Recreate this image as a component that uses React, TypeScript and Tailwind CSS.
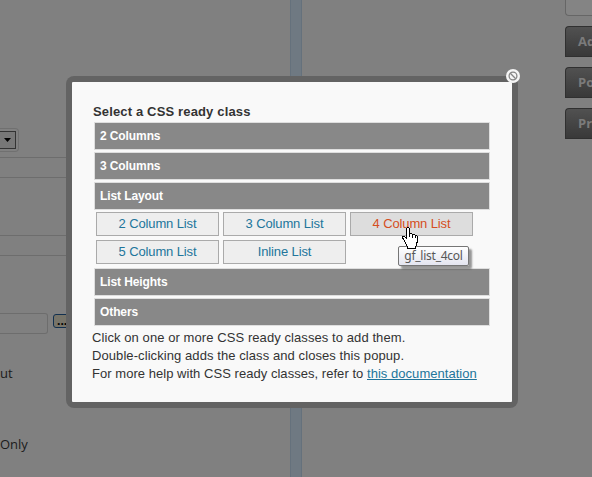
import React from "react";

function Bar({ label }: { label: string }) {
  return (
    <div className="h-7 w-[396px] border border-[#dedede] bg-[#888] pt-px pl-[5px] text-[12px] leading-[25px] font-bold tracking-[-0.1px] text-white">
      {label}
    </div>
  );
}

function ClassButton({ label, active = false }: { label: string; active?: boolean }) {
  return (
    <button
      className={
        "h-6 w-[123px] border border-[#aaa] text-center text-[13px] leading-[22px] tracking-[-0.12px] " +
        (active ? "bg-[#ddd] text-[#d54e21]" : "bg-[#eee] text-[#21759b]")
      }
    >
      {label}
    </button>
  );
}

function SideTab({ label }: { label: string }) {
  return (
    <div className="h-[31px] rounded-tl-[4px] border border-r-0 border-[#303030] bg-gradient-to-b from-[#515151] to-[#393939] pl-3 font-['Open_Sans',sans-serif] text-[13px] leading-[28px] font-bold text-[#7b7b7b]">
      {label}
    </div>
  );
}

function Page() {
  return (
    <div className="flex h-full w-full">
      <div className="flex w-[290px] shrink-0 flex-col pt-[128px] font-['Open_Sans',sans-serif] text-[13px] text-[#1b1b1b]">
        <div className="flex h-6 w-[19px] items-center rounded-r-[4px] border border-l-0 border-[#707070]">
          <div className="flex h-[18px] w-4 items-center justify-center border border-l-0 border-[#333] bg-[#777]">
            <svg width="7" height="4" viewBox="0 0 7 4"><path d="M0 0h7L3.5 4z" fill="#000" /></svg>
          </div>
        </div>
        <div className="mt-[5px] h-[21px] border-y border-[#6d6d6d]" />
        <div className="mt-[57px] h-[21px] border-y border-[#6d6d6d]" />
        <div className="mt-[57px] flex gap-[5px]">
          <div className="h-[21px] w-12 rounded-r-[3px] border border-l-0 border-[#6d6d6d]" />
          <div className="mt-px h-[14px] w-10 rounded-[3px] border border-[#12304f] bg-[#777469] pl-[3px] text-[12px] leading-[11px] font-bold text-black">...</div>
        </div>
        <div className="mt-[29px] h-5 leading-5">ut</div>
        <div className="mt-[51px] h-5 leading-5">Only</div>
      </div>
      <div className="w-3 shrink-0 border-x border-[#65717c] bg-[#6f7982]" />
      <div className="flex flex-1 flex-col pl-[263px]">
        <div className="mb-[10px] h-4 rounded-bl-[4px] border-b border-l border-[#666] bg-[#848484]" />
        <div className="flex flex-col gap-[10px]">
          <SideTab label="Ad" />
          <SideTab label="Po" />
          <SideTab label="Pr" />
        </div>
      </div>
    </div>
  );
}

function Popup() {
  return (
    <div className="absolute top-[76px] left-[66px] h-[332px] w-[452px] rounded-[8px] bg-[#636363] p-[6px]">
      <div className="h-full rounded-[1px] bg-[#f9f9f9] pt-[21px] pl-5">
        <h3 className="ml-px h-[19px] text-[13px] leading-[18px] font-bold tracking-[0.15px] text-[#333]">
          Select a CSS ready class
        </h3>
        <div className="ml-[2px] flex flex-col gap-[2px]">
          <Bar label="2 Columns" />
          <Bar label="3 Columns" />
          <Bar label="List Layout" />
          <div className="mb-[2px] ml-[2px] flex w-[390px] flex-wrap gap-1">
            <ClassButton label="2 Column List" />
            <ClassButton label="3 Column List" />
            <ClassButton label="4 Column List" active />
            <ClassButton label="5 Column List" />
            <ClassButton label="Inline List" />
          </div>
          <Bar label="List Heights" />
          <Bar label="Others" />
        </div>
        <div className="mt-[3px] text-[13px] leading-[18px] whitespace-nowrap text-[#333]">
          <p className="tracking-[0.08px]">Click on one or more CSS ready classes to add them.</p>
          <p className="tracking-[0.08px]">Double-clicking adds the class and closes this popup.</p>
          <p className="tracking-[0.04px]">
            For more help with CSS ready classes, refer to{" "}
            <a className="text-[#21759b] underline">this documentation</a>
          </p>
        </div>
      </div>
      <svg className="absolute top-[-8px] left-[439px]" width="16" height="16" viewBox="0 0 16 16" fill="none">
        <circle cx="8" cy="8" r="7" fill="#f5f5f5" />
        <circle cx="8" cy="8" r="3.9" stroke="#858585" strokeWidth="1.3" />
        <path d="M5.3 5.3l5.4 5.4" stroke="#858585" strokeWidth="1.3" />
      </svg>
    </div>
  );
}

function HandCursor() {
  return (
    <svg className="absolute top-[227px] left-[402px]" width="17" height="22" viewBox="0 0 17 22" shapeRendering="crispEdges">
      <path
        d="M4.5 1.5l1-1h1l1 1v5h2l1 1h2l1 1h1l1 1v5l-1 2v2l-1 1v2h-8v-2l-2-3v-1l-2-3-1-2v-1h2l2 2z"
        fill="#fff"
        stroke="#000"
      />
      <path d="M7.5 6v4M10.5 8v3M13.5 9v2" stroke="#000" />
    </svg>
  );
}

export default function App() {
  return (
    <div className="relative h-[477px] w-[592px] overflow-hidden bg-[#808080] font-['Liberation_Sans',Arial,sans-serif]">
      <Page />
      <Popup />
      <div className="absolute top-[246px] left-[398px] h-5 w-[71px] rounded-[2px] border border-[#767676] bg-gradient-to-b from-white to-[#e4e5f0] text-center font-['Noto_Sans',sans-serif] text-[12px] leading-[18px] tracking-[-0.25px] text-[#575757] shadow-[3px_3px_2px_rgba(0,0,0,0.4)]">
        gf_list_4col
      </div>
      <HandCursor />
    </div>
  );
}
